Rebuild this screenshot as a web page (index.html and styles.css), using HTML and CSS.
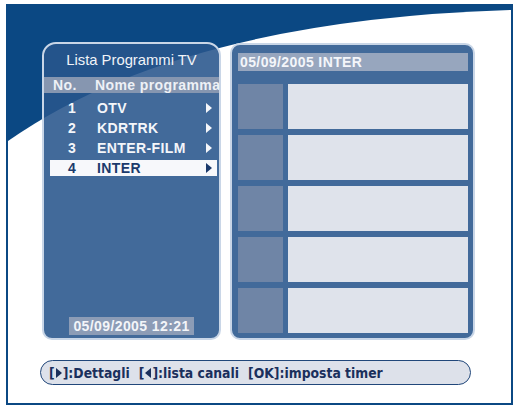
FILE: index.html
```html
<!DOCTYPE html>
<html lang="it">
<head>
<meta charset="utf-8">
<title>Lista Programmi TV</title>
<link rel="stylesheet" href="styles.css">
</head>
<body>
<div class="screen">
  <svg class="bg" viewBox="0 0 503 397" preserveAspectRatio="none" aria-hidden="true">
    <rect x="0" y="0" width="503" height="397" fill="#0b4883"/>
    <path d="M0,135 Q172,14 504,4 L504,398 L0,398 Z" fill="#ffffff"/>
  </svg>
  <div class="panels">
    <section class="list">
      <h1 class="list-title">Lista Programmi TV</h1>
      <div class="list-head"><span class="col-no">No.</span><span class="col-name">Nome programma</span></div>
      <ul class="rows">
        <li class="row"><span class="num">1</span><span class="name">OTV</span><svg class="arrow" viewBox="0 0 6 10"><path d="M0,0 L6,5 L0,10 Z"/></svg></li>
        <li class="row"><span class="num">2</span><span class="name">KDRTRK</span><svg class="arrow" viewBox="0 0 6 10"><path d="M0,0 L6,5 L0,10 Z"/></svg></li>
        <li class="row"><span class="num">3</span><span class="name">ENTER-FILM</span><svg class="arrow" viewBox="0 0 6 10"><path d="M0,0 L6,5 L0,10 Z"/></svg></li>
        <li class="row row-selected"><span class="num">4</span><span class="name">INTER</span><svg class="arrow" viewBox="0 0 6 10"><path d="M0,0 L6,5 L0,10 Z"/></svg></li>
      </ul>
      <div class="clock">05/09/2005 12:21</div>
    </section>
    <section class="epg">
      <div class="epg-head">05/09/2005 INTER</div>
      <div class="slot"><div class="slot-time"></div><div class="slot-info"></div></div>
      <div class="slot"><div class="slot-time"></div><div class="slot-info"></div></div>
      <div class="slot"><div class="slot-time"></div><div class="slot-info"></div></div>
      <div class="slot"><div class="slot-time"></div><div class="slot-info"></div></div>
      <div class="slot"><div class="slot-time"></div><div class="slot-info"></div></div>
    </section>
  </div>
  <div class="hint">
    <span class="hint-item">[<svg class="key-tri" viewBox="0 0 6 10"><path d="M0,0 L6,5 L0,10 Z"/></svg>]:Dettagli</span>
    <span class="hint-item">[<svg class="key-tri" viewBox="0 0 6 10"><path d="M6,0 L0,5 L6,10 Z"/></svg>]:lista canali</span>
    <span class="hint-item">[OK]:imposta timer</span>
  </div>
</div>
</body>
</html>
```

FILE: styles.css
```css
html, body {
  margin: 0;
  padding: 0;
  background: #ffffff;
}

body {
  font-family: "Liberation Sans", Arial, sans-serif;
}

.screen {
  position: relative;
  box-sizing: border-box;
  width: 507px;
  height: 401px;
  margin: 4px 0 0 6px;
  border: 2px solid #0b4883;
  padding: 36px 0 0 34px;
  overflow: hidden;
}

.bg {
  position: absolute;
  left: 0;
  top: 0;
  width: 503px;
  height: 397px;
  display: block;
}

.panels {
  position: relative;
  display: flex;
  align-items: flex-start;
  gap: 9px;
}

/* Left: channel list */
.list {
  box-sizing: border-box;
  width: 179px;
  height: 298px;
  border: 2px solid #c9d6e7;
  border-radius: 14px 14px 10px 10px;
  background: rgba(40, 85, 140, 0.88);
  display: flex;
  flex-direction: column;
  overflow: hidden;
}

.list-title {
  margin: 6px 0 0;
  font-size: 14.8px;
  font-weight: 400;
  line-height: 20px;
  text-align: center;
  color: #f0f3f8;
}

.list-head {
  margin-top: 7px;
  height: 16px;
  display: flex;
  background: #8696b0;
  font-size: 14px;
  font-weight: 700;
  letter-spacing: 0.4px;
  line-height: 16px;
  white-space: nowrap;
  color: #eef1f6;
}

.col-no {
  box-sizing: border-box;
  flex: 0 0 51px;
  padding-left: 9px;
}

.rows {
  list-style: none;
  margin: 7px 0 0;
  padding: 0;
}

.row {
  height: 16px;
  margin: 0 2px 4px 6px;
  display: flex;
  align-items: center;
  font-size: 14px;
  font-weight: 700;
  letter-spacing: 0.4px;
  line-height: 16px;
  color: #f4f6fa;
}

.num {
  box-sizing: border-box;
  flex: 0 0 47px;
  padding-left: 18px;
}

.name {
  flex: 1;
}

.arrow {
  width: 6px;
  height: 10px;
  margin-right: 5px;
  fill: #f4f6fa;
}

.row-selected {
  background: #f7f8fb;
  color: #1b3a6c;
}

.row-selected .arrow {
  fill: #1b3a6c;
}

.clock {
  margin-top: auto;
  margin-bottom: 3px;
  align-self: center;
  height: 18px;
  padding: 0 4px;
  background: #8c9cb6;
  font-size: 14px;
  font-weight: 700;
  letter-spacing: 0.4px;
  line-height: 18px;
  color: #f3f5f9;
}

/* Right: EPG */
.epg {
  box-sizing: border-box;
  width: 245px;
  height: 297px;
  margin-top: 1px;
  border: 2px solid #c9d6e7;
  border-radius: 10px;
  padding: 8px 5px 0 6px;
  background: rgba(40, 85, 140, 0.88);
}

.epg-head {
  height: 18px;
  margin-bottom: 13px;
  padding-left: 2px;
  background: #97a6be;
  font-size: 14px;
  font-weight: 700;
  letter-spacing: 0.4px;
  line-height: 18px;
  color: #f4f6fa;
}

.slot {
  display: flex;
  gap: 5px;
  height: 45px;
  margin-bottom: 6px;
}

.slot:last-child {
  margin-bottom: 0;
}

.slot-time {
  flex: 0 0 45px;
  background: #6f85a6;
}

.slot-info {
  flex: 1;
  background: #dfe3eb;
}

/* Bottom hint bar */
.hint {
  position: relative;
  box-sizing: border-box;
  width: 431px;
  height: 25px;
  margin: 20px 0 0 -2px;
  padding-left: 8px;
  border: 1.5px solid #21477a;
  border-radius: 13px;
  background: #dde1ea;
  display: flex;
  align-items: center;
  gap: 9px;
  font-family: "Liberation Sans Narrow", "DejaVu Sans Condensed", "Liberation Sans", sans-serif;
  font-size: 13.8px;
  font-weight: 700;
  color: #1a2f5c;
  white-space: nowrap;
}

.key-tri {
  width: 6px;
  height: 10px;
  margin: 0 1px;
  fill: #1a2f5c;
}
```
